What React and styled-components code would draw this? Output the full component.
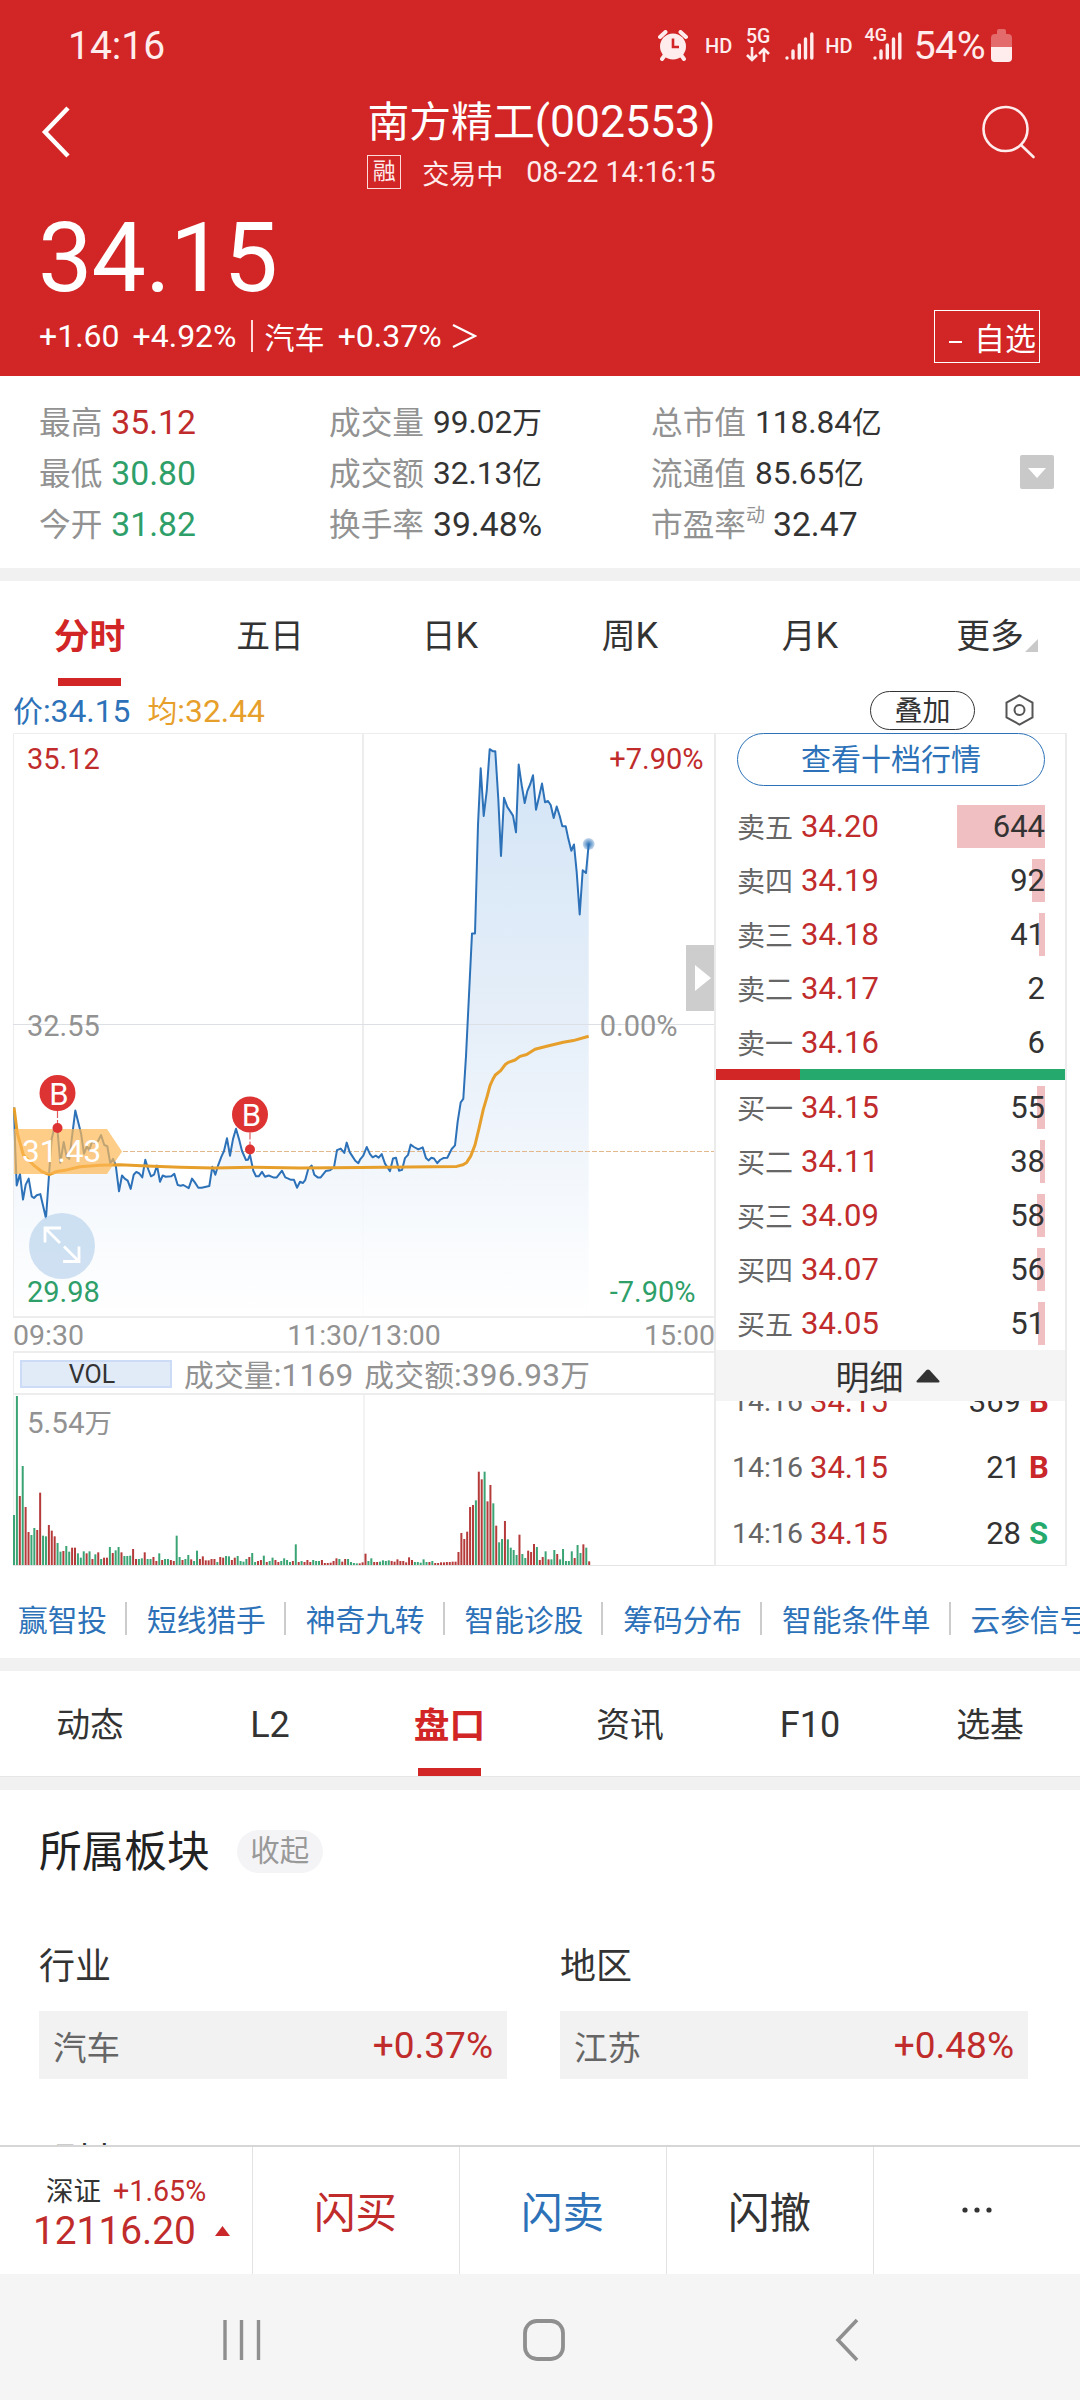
import styled, { createGlobalStyle } from 'styled-components';

const RED = '#d12526';
const UP = '#c02b2b';
const DOWN = '#2f9f6a';
const BLUE = '#2d72b8';
const ORANGE = '#e79f2c';
const FONT = "Roboto, 'Noto Sans CJK SC', sans-serif";

const GlobalStyle = createGlobalStyle`
  * { box-sizing: border-box; }
  body {
    margin: 0;
    background: #fff;
    color: #333;
    font-family: ${FONT};
  }
  svg { display: block; flex-shrink: 0; }
`;

const Screen = styled.div`
  width: 1080px;
  height: 2400px;
  overflow: hidden;
  display: flex;
  flex-direction: column;
  background: #fff;
  white-space: nowrap;
`;

// Chinese glyphs are set a little smaller than the digits beside them
const Han = styled.span`
  font-size: 0.94em;
`;

const Mixed = ({ children }) =>
  String(children)
    .split(/([\u4e00-\u9fff]+)/)
    .map((part, i) => (i % 2 ? <Han key={i}>{part}</Han> : part));

/* ---------- header ---------- */

const Header = styled.header`
  height: 376px;
  background: ${RED};
  color: #fff;
  flex-shrink: 0;
`;

const StatusBar = styled.div`
  height: 90px;
  padding: 1px 68px 0 68px;
  display: flex;
  align-items: center;
  font-size: 39px;
  color: #ffecec;
`;

const StatusIcons = styled.div`
  margin-left: auto;
  display: flex;
  align-items: center;
`;

const Hd = styled.span`
  font-size: 20px;
  font-weight: 500;
  margin-left: ${props => props.$gap}px;
`;

const NetType = styled.div`
  width: 24px;
  margin-left: 14px;
  font-size: 19.5px;
  font-weight: 500;
  line-height: 16px;
  display: flex;
  flex-direction: column;
  align-items: center;
  gap: 2px;
`;

const FourG = styled.div`
  position: relative;
  margin-left: 21px;

  span {
    position: absolute;
    left: -9px;
    top: -6px;
    font-size: 18px;
    font-weight: 500;
    line-height: 18px;
  }
`;

const SignalIcon = styled.svg`
  margin-left: ${props => props.$gap || 0}px;
`;

const Percent = styled.span`
  font-size: 39.5px;
  margin-left: 11px;
  margin-right: 6px;
  letter-spacing: -0.6px;
`;

const Signal = ({ gap }) => (
  <SignalIcon $gap={gap} width="29" height="28" viewBox="0 0 29 28" stroke="#ffecec" strokeWidth="3.4" strokeLinecap="round">
    <path d="M2 26v.01M8 26v-7M14.3 26v-13M20.5 26v-19M26.8 26v-24" />
  </SignalIcon>
);

const TitleBar = styled.div`
  height: 114px;
  padding: 9px 44px 0 41px;
  display: flex;
  justify-content: space-between;
`;

const TitleBlock = styled.div`
  display: flex;
  flex-direction: column;
  align-items: center;
  gap: 9px;
  margin-left: 29px;
`;

const StockName = styled.div`
  font-size: 44.5px;
  line-height: 46px;
`;

const StockMeta = styled.div`
  display: flex;
  align-items: center;
  height: 34px;
  font-size: 28.8px;
  letter-spacing: -0.1px;
  color: #ffecec;
`;

const MarginTag = styled.span`
  width: 34px;
  height: 34px;
  border: 1.5px solid #ffdada;
  font-size: 23px;
  line-height: 32px;
  text-align: center;
  margin-right: 21px;
`;

const MetaTime = styled.span`
  margin-left: 23px;
`;

const LastPrice = styled.div`
  height: 106px;
  line-height: 108px;
  padding-left: 38px;
  font-size: 97px;
  letter-spacing: -0.9px;
`;

const ChangeRow = styled.div`
  height: 52px;
  padding: 0 40px 0 39px;
  display: flex;
  align-items: center;
  font-size: 32px;
`;

const Change = styled.span`
  margin-right: ${props => props.$gap || 0}px;
`;

const VRule = styled.i`
  width: 2px;
  height: 32px;
  background: #ffdada;
  margin: 0 12px 0 14px;
`;

const WatchButton = styled.button`
  width: 106px;
  height: 53px;
  margin-left: auto;
  padding: 0 3px 0 14px;
  border: 1.5px solid #fff;
  background: none;
  color: #fff;
  font: 31px ${FONT};
  display: flex;
  align-items: center;
  justify-content: space-between;
`;

const Dash = styled.i`
  width: 13px;
  height: 2px;
  background: #fff;
  margin-top: 11px;
`;

/* ---------- key figures ---------- */

const Stats = styled.section`
  height: 192px;
  flex-shrink: 0;
  padding: 21px 26px 0 39px;
  display: flex;
  align-items: flex-start;
`;

const StatColumn = styled.div`
  width: ${props => props.$width}px;
`;

const Stat = styled.div`
  height: 51px;
  line-height: 51px;
  font-size: 33.7px;
  color: ${props => props.$color || '#333'};
`;

const StatLabel = styled.span`
  color: #929292;
  margin-right: 9px;

  sup {
    font-size: 19px;
    line-height: 0;
    vertical-align: 14px;
    margin-right: -1px;
  }
`;

const StatValue = styled.span`
  font-size: ${props => (props.$unit ? 31.6 : 33.7)}px;
  line-height: 1;
  vertical-align: ${props => (props.$unit ? 1.5 : 0)}px;
`;

const MoreToggle = styled.button`
  width: 34px;
  height: 34px;
  margin: 58px 0 0 auto;
  padding: 0;
  border: 0;
  border-radius: 2px;
  background: #c9c9c9;
  display: flex;
  align-items: center;
  justify-content: center;
`;

const Band = styled.div`
  height: ${props => props.$height || 13}px;
  flex-shrink: 0;
  background: #f1f1f1;
  border-top: ${props => (props.$lined ? '1px solid #e6e6e6' : '0')};
`;

/* ---------- tabs ---------- */

const Tabs = styled.nav`
  height: 105px;
  flex-shrink: 0;
  display: grid;
  grid-template-columns: repeat(6, 1fr);
`;

const Tab = styled.a`
  display: flex;
  flex-direction: column;
  align-items: center;
  justify-content: space-between;
  font-size: ${props => (props.$active ? 38 : 36)}px;
  font-weight: ${props => (props.$active ? 700 : 400)};
  line-height: 50px;
  padding: ${props => props.$top}px ${props => (props.$active ? 1 : 0)}px 0 0;
  color: ${props => (props.$active ? RED : '#333')};

  &::after {
    content: '';
    width: 63px;
    height: 8px;
    background: ${props => (props.$active ? RED : 'transparent')};
  }
`;

const MoreLabel = styled.span`
  position: relative;

  svg {
    position: absolute;
    right: -14px;
    bottom: 10px;
  }
`;

/* ---------- chart and order book ---------- */

const ChartInfo = styled.div`
  height: 47px;
  flex-shrink: 0;
  padding: 1px 46px 0 13px;
  display: flex;
  align-items: center;
  font-size: 31.8px;
`;

const InfoValue = styled.span`
  color: ${props => props.$color};
  margin: -3px 17px 0 0;
`;

const OverlayButton = styled.button`
  width: 105px;
  height: 39px;
  margin: 0 30px 0 auto;
  padding: 0;
  border: 1.5px solid #333;
  border-radius: 20px;
  background: none;
  color: #333;
  font: 28px/39px ${FONT};
`;

const Market = styled.section`
  height: 833px;
  flex-shrink: 0;
  padding: 0 13px;
  display: flex;
`;

const Charts = styled.div`
  width: 702px;
  flex-shrink: 0;
`;

const TimeAxis = styled.div`
  height: 37px;
  border-top: 2px solid #ededed;
  border-bottom: 2px solid #ededed;
  display: flex;
  align-items: center;
  justify-content: space-between;
  padding-top: 2px;
  font-size: 28.5px;
  color: #929292;
`;

const VolumeBar = styled.div`
  height: 42px;
  border-left: 1px solid #ededed;
  border-bottom: 2px solid #ededed;
  padding: 1px 0 0 6px;
  display: flex;
  align-items: center;
  font-size: 31.6px;
  color: #929292;
`;

const VolButton = styled.span`
  width: 152px;
  height: 28px;
  margin-right: 12px;
  padding-right: 8px;
  border: 2px solid #cddcf6;
  background: #e1eaf7;
  color: #333;
  font-size: 25px;
  line-height: 26px;
  text-align: center;
`;

const VolText = styled.span`
  margin-right: 11px;
  letter-spacing: 0.2px;
`;

const Book = styled.div`
  width: 353px;
  flex-shrink: 0;
  margin-left: -1px;
  border: 2px solid #ebebeb;
  border-top-width: 1px;
  border-bottom-width: 1px;
  display: flex;
  flex-direction: column;
`;

const DepthButton = styled.button`
  height: 53px;
  flex-shrink: 0;
  margin: -1px 20px 13px 21px;
  padding: 0;
  border: 1.5px solid ${BLUE};
  border-radius: 27px;
  background: #fff;
  color: ${BLUE};
  font: 30px/50px ${FONT};
`;

const Level = styled.div`
  height: 54px;
  flex-shrink: 0;
  padding: 0 20px 0 21px;
  display: flex;
  align-items: center;
  font-size: 31px;
`;

const LevelName = styled.span`
  width: 64px;
  font-size: 28px;
  color: #666;
`;

const LevelPrice = styled.span`
  color: ${UP};
`;

const LevelQty = styled.span`
  position: relative;
  z-index: 0;
  margin-left: auto;
  line-height: 43px;

  i {
    position: absolute;
    z-index: -1;
    top: 0;
    right: 0;
    height: 43px;
    background: #efbfc1;
  }
`;

const Balance = styled.div`
  height: 11px;
  flex-shrink: 0;
  background: linear-gradient(to right, ${RED} 24%, #25a96d 24%);
`;

const DetailHead = styled.div`
  height: 51px;
  flex-shrink: 0;
  background: #f4f4f4;
  display: flex;
  align-items: center;
  justify-content: center;
  gap: 12px;
  padding-right: 6px;
  font-size: 34px;
  z-index: 1;
`;

const Ticks = styled.div`
  flex: 1;
  overflow: hidden;
`;

const Tick = styled.div`
  height: 66px;
  padding: 0 16px;
  display: flex;
  align-items: center;
  font-size: 31px;

  &:first-child {
    margin-top: -33px;
  }
`;

const TickTime = styled.span`
  width: 78px;
  font-size: 28.5px;
  color: #666;
`;

const TickQty = styled.span`
  margin-left: auto;
`;

const Side = styled.b`
  width: 20px;
  margin-left: 8px;
  color: ${props => (props.$sell ? '#25a96d' : '#c9272a')};
`;

/* ---------- links ---------- */

const Links = styled.div`
  height: 92px;
  flex-shrink: 0;
  padding: 12px 0 0 18px;
  display: flex;
  align-items: center;
  overflow: hidden;
  color: ${BLUE};
  font-size: 29.7px;

  a {
    flex-shrink: 0;
  }

  a + a {
    margin-left: 18px;
    padding-left: 22px;
    background: linear-gradient(#ccc, #ccc) left center / 2px 33px no-repeat;
  }
`;

/* ---------- sectors ---------- */

const Sectors = styled.section`
  height: 355px;
  flex-shrink: 0;
  overflow: hidden;
  padding: 32px 53px 0 39px;
`;

const SectionTitle = styled.h2`
  margin: 0;
  height: 60px;
  display: flex;
  align-items: center;
  font-size: 42.7px;
  font-weight: 400;
  line-height: 60px;
  color: #222;
`;

const FoldButton = styled.button`
  width: 86px;
  height: 43px;
  margin: -1px 0 0 27px;
  padding: 0;
  border: 0;
  border-radius: 22px;
  background: #f4f4f6;
  color: #999;
  font: 29.5px/43px ${FONT};
`;

const SectorGrid = styled.div`
  display: grid;
  grid-template-columns: 468px 468px;
  column-gap: 53px;
  padding-top: 54px;
`;

const SectorName = styled.div`
  height: 75px;
  line-height: 63px;
  font-size: 36px;
`;

const SectorCard = styled.div`
  height: 68px;
  margin-bottom: 52px;
  padding: 0 14px;
  background: #f2f2f2;
  display: flex;
  align-items: center;
  justify-content: space-between;
  font-size: 33.5px;
  color: #666;

  em {
    font-style: normal;
    font-size: 37px;
    color: ${UP};
  }
`;

/* ---------- bottom ---------- */

const TradeBar = styled.footer`
  height: 129px;
  flex-shrink: 0;
  border-top: 2px solid #d6d6d6;
  display: grid;
  grid-template-columns: 252px repeat(4, 207px);
  background: #fff;
`;

const TradeItem = styled.div`
  display: flex;
  align-items: center;
  justify-content: center;
  padding: 0 1px 2px 0;
  border-left: 1px solid #e2e2e2;
  font-size: 41.5px;
  color: ${props => props.$color || '#333'};
`;

const IndexCell = styled.div`
  padding: 27px 0 0 33px;
  color: ${UP};
`;

const IndexTop = styled.div`
  padding-left: 13px;
  font-size: 28.7px;
  line-height: 34px;

  span {
    color: #333;
    font-size: 27.5px;
    margin-right: 12px;
  }
`;

const IndexValue = styled.div`
  display: flex;
  align-items: center;
  gap: 19px;
  font-size: 38.8px;
  line-height: 44px;
`;

const NavBar = styled.div`
  flex: 1;
  background: #f5f5f5;
  display: flex;
  align-items: center;
  padding: 6px 0 0 223px;
`;

const NavIcon = styled.svg`
  margin-right: ${props => props.$gap || 0}px;
`;

/* ---------- data ---------- */

const stats = [
  {
    width: 290,
    items: [
      ['最高', '35.12', UP],
      ['最低', '30.80', DOWN],
      ['今开', '31.82', DOWN],
    ],
  },
  {
    width: 322,
    items: [
      ['成交量', '99.02万'],
      ['成交额', '32.13亿'],
      ['换手率', '39.48%'],
    ],
  },
  {
    width: 300,
    items: [
      ['总市值', '118.84亿'],
      ['流通值', '85.65亿'],
      ['市盈率', '32.47', null, '动'],
    ],
  },
];

const sells = [
  ['卖五', '34.20', 644, 88],
  ['卖四', '34.19', 92, 13],
  ['卖三', '34.18', 41, 6],
  ['卖二', '34.17', 2, 0],
  ['卖一', '34.16', 6, 0],
];

const buys = [
  ['买一', '34.15', 55, 8],
  ['买二', '34.11', 38, 5],
  ['买三', '34.09', 58, 8],
  ['买四', '34.07', 56, 8],
  ['买五', '34.05', 51, 7],
];

const ticks = [
  ['14:16', '34.15', 369, 'B'],
  ['14:16', '34.15', 21, 'B'],
  ['14:16', '34.15', 28, 'S'],
];

const links = ['赢智投', '短线猎手', '神奇九转', '智能诊股', '筹码分布', '智能条件单', '云参信号'];

// x,y pairs on a 2106 x 1474 grid that is stretched over the plot
const PRICE = `3,947 7,1057 11,1144 21,1115 30,1180 38,1142 47,1127 56,1172 63,1176 71,1169 82,1166
99,1227 109,1107 116,1027 124,999 133,999 142,1087 152,1034 161,1072 169,1077 178,1015 187,955
204,1012 213,1064 222,1045 229,1055 237,1033 246,1037 255,1032 264,1017 274,1042 283,1045 292,1089
300,1077 308,1092 318,1159 327,1119 335,1127 344,1132 353,1153 362,1117 370,1110 379,1114 388,1124
397,1079 406,1104 414,1121 423,1117 432,1094 441,1135 449,1119 458,1122 475,1121 484,1115 494,1143
503,1145 511,1143 527,1151 537,1127 546,1137 556,1150 566,1150 589,1146 598,1097 607,1117 616,1092
625,1072 633,1057 642,1025 651,1069 660,1027 669,1001 678,1027 687,1057 699,1080 705,1079 711,1067
721,1107 729,1121 737,1121 747,1110 756,1122 767,1119 781,1124 791,1124 807,1107 817,1124 826,1127
834,1130 843,1130 852,1150 861,1135 870,1138 877,1130 886,1102 896,1094 904,1117 914,1124 923,1124
938,1108 951,1106 963,1098 972,1055 983,1051 994,1062 1001,1036 1010,1060 1018,1070 1027,1082 1036,1088
1041,1079 1051,1069 1061,1047 1071,1065 1079,1073 1088,1069 1097,1074 1106,1065 1116,1089 1131,1108
1140,1076 1149,1074 1158,1107 1167,1105 1176,1075 1185,1067 1193,1041 1203,1047 1216,1053 1229,1048
1239,1075 1247,1081 1255,1074 1263,1076 1273,1088 1281,1080 1291,1075 1303,1074 1316,1052 1326,1043
1334,982 1343,934 1351,925 1359,817 1368,662 1377,507 1386,507 1395,232 1403,89 1412,210 1421,147
1430,41 1439,46 1447,46 1456,167 1464,311 1473,164 1483,187 1500,209 1509,251 1517,80 1526,132
1535,177 1543,147 1552,129 1560,107 1569,194 1578,162 1587,128 1596,175 1605,172 1613,182 1622,215
1631,186 1640,210 1648,236 1658,236 1666,267 1675,298 1683,282 1691,352 1700,459 1709,347 1719,354
1727,281`;

const AVERAGE = `3,947 13,1012 31,1067 61,1092 86,1109 109,1117 131,1109 161,1105 201,1097 261,1093
321,1092 401,1095 501,1098 601,1100 721,1098 861,1100 1041,1099 1331,1096 1350,1092 1361,1086 1373,1070
1386,1042 1398,1000 1411,952 1422,920 1431,892 1440,875 1447,865 1463,854 1476,839 1486,833 1506,827
1521,818 1541,813 1566,800 1601,792 1651,782 1681,778 1727,767`;

const parse = text =>
  text.split(/\s+/).map(pair => {
    const [x, y] = pair.split(',').map(Number);
    return [x / 3, y / 2.529];
  });

const toLine = points => points.map(p => p.map(n => n.toFixed(1)).join(',')).join(' ');

// one entry a minute: g = falling, r = rising, then the height in thirds of a pixel
const VOLUME = `g150 g507 r207 g297 r174 r99 g90 g111 r105 r217 g88 g86 r120 r103 r86 g66 g40 r42 g57 g40
r52 r52 g35 g22 g41 r35 g41 r18 g32 r38 g18 r22 r22 g54 r36 g44 g54 r38 g27 g27 g28 r48 r18 g18 g20 r38
g18 g18 r24 r12 g35 r15 g18 g18 r15 r12 g88 g24 r15 g18 g30 r17 g12 g43 r18 r26 r14 r14 r18 r18 g9 r24
r22 g27 g26 r15 r22 g27 g12 g10 g18 r24 g36 g9 r12 r15 g28 r9 g12 g22 r15 r9 g12 g20 g15 g9 r12 g62 r9
g12 r9 r15 r9 g15 g12 g12 r15 r6 r6 r7 r12 r20 g18 r10 r18 g18 g9 g6 g5 r5 r8 r34 g12 g20 r9 r9 g10 g14
g12 g14 r12 r10 r17 r12 r12 r8 r23 r15 g9 g9 g7 g17 g9 r9 g12 r6 r6 r8 r8 r9 r9 r10 r10 r39 r96 r78 r100
r174 r180 g194 r280 r257 g280 r191 r240 g185 r118 g68 g78 r132 g77 g52 g45 g30 r91 g33 g21 r43 r39 r63
g54 r15 r24 g41 r17 g17 g45 r33 g17 g48 g12 g12 g41 r21 g60 g36 r62 g52 r11`.split(/\s+/);

const BuyMark = ({ x, y }) => (
  <g>
    <path d={`M${x} ${y + 18}v14`} stroke="#e05a5a" strokeWidth="1.2" strokeDasharray="7 2" />
    <circle cx={x} cy={y} r="18" fill="#dd3333" />
    <circle cx={x} cy={y + 35} r="5" fill="#dd3333" />
    <text x={x + 1.5} y={y + 11.5} fontSize="31" fill="#fff" textAnchor="middle">B</text>
  </g>
);

const PriceChart = () => {
  const price = parse(PRICE);
  const line = toLine(price);
  const [lastX, lastY] = price[price.length - 1];

  return (
    <svg width="702" height="583" viewBox="0 0 702 583" fontFamily={FONT} fontSize="29">
      <defs>
        <linearGradient id="area" gradientUnits="userSpaceOnUse" x1="0" y1="0" x2="0" y2="583">
          <stop offset="0" stopColor="#cde1f5" />
          <stop offset="0.5" stopColor="#e3edf8" />
          <stop offset="1" stopColor="#fff" />
        </linearGradient>
        <radialGradient id="glow">
          <stop offset="0" stopColor="#2d72b8" />
          <stop offset="1" stopColor="#2d72b8" stopOpacity="0.25" />
        </radialGradient>
      </defs>
      <path d="M350 1V583" stroke="#ededed" strokeWidth="2" />
      <polygon points={`1,583 ${line} ${lastX},583`} fill="url(#area)" fillOpacity="0.9" />
      <path d="M.5 583V.5H702" fill="none" stroke="#ededed" />
      <path d="M0 291.5H702" stroke="#dcdfe3" />
      <path d="M110 418.5H702" stroke="#e3b88c" strokeDasharray="5 2" />
      <polyline points={line} fill="none" stroke={BLUE} strokeWidth="2" strokeLinejoin="round" />
      <polyline points={toLine(parse(AVERAGE))} fill="none" stroke={ORANGE} strokeWidth="3" strokeLinejoin="round" />
      <circle cx={lastX} cy={lastY} r="6" fill="url(#glow)" />

      <path d="M1 396H94L109 418.5 94 441H1z" fill="#feb854" fillOpacity="0.7" />
      <text x="9" y="429" fontSize="31.5" fill="#fff">31.43</text>
      <BuyMark x={44.5} y={360} />
      <BuyMark x={237} y={381.5} />

      <circle cx="49" cy="513" r="33" fill="#c6daf0" fillOpacity="0.85" />
      <path d="M32 509.500V495H48M33 496L47 510M66 513.500V528.500H50M65 527.500L51 513.500" fill="none" stroke="#fff" strokeWidth="2.8" />

      <text x="14" y="36" fill={UP}>35.12</text>
      <text x="14" y="303" fill="#929292">32.55</text>
      <text x="14" y="569" fill={DOWN}>29.98</text>
      <text x="690.5" y="36" fill={UP} textAnchor="end">+7.90%</text>
      <text x="664.5" y="303" fill="#929292" textAnchor="end">0.00%</text>
      <text x="682.5" y="569" fill={DOWN} textAnchor="end">-7.90%</text>

      <rect x="673" y="212" width="29" height="66" fill="#cdcdcd" />
      <path d="M682 232L698 245 682 258z" fill="#fff" />
    </svg>
  );
};

const VolumeChart = () => (
  <svg width="702" height="171" viewBox="0 0 702 171" fontFamily={FONT}>
    <path d="M351 0V170M.5 0V170" stroke="#f0f0f0" strokeWidth="1.5" />
    {VOLUME.map((entry, i) => {
      const height = Number(entry.slice(1)) / 3;
      return (
        <rect
          key={i}
          x={i * 2.905}
          y={170 - height}
          width="2"
          height={height}
          fill={entry[0] === 'g' ? '#3ba474' : '#b53b3b'}
        />
      );
    })}
    <path d="M0 170.5H702" stroke="#e4e4e4" />
    <text x="14" y="38" fontSize="29.5" fill="#929292">
      5.54<tspan fontSize="27.5">万</tspan>
    </text>
  </svg>
);

const LevelRow = ({ level: [name, price, qty, width] }) => (
  <Level>
    <LevelName>{name}</LevelName>
    <LevelPrice>{price}</LevelPrice>
    <LevelQty>
      {qty}
      <i style={{ width }} />
    </LevelQty>
  </Level>
);

const TabRow = ({ tabs, active, top }) => (
  <Tabs>
    {tabs.map(name => (
      <Tab key={name} $active={name === active} $top={top}>
        {name === '更多' ? (
          <MoreLabel>
            <Mixed>{name}</Mixed>
            <svg width="13" height="13"><path d="M13 0V13H0z" fill="#c9c9c9" /></svg>
          </MoreLabel>
        ) : (
          <span><Mixed>{name}</Mixed></span>
        )}
      </Tab>
    ))}
  </Tabs>
);

const App = () => (
  <Screen lang="zh-CN">
    <GlobalStyle />
    <Header>
      <StatusBar>
        14:16
        <StatusIcons>
          <svg width="30" height="31" viewBox="0 0 30 31">
            <path d="M2 7L7.500 2M28 7L22.500 2M7 25L4 29M23 25L26 29" stroke="#ffecec" strokeWidth="4" strokeLinecap="round" />
            <circle cx="15" cy="16.500" r="13" fill="#ffecec" />
            <path d="M15 8.500V17H21" fill="none" stroke={RED} strokeWidth="2.6" />
          </svg>
          <Hd $gap={17}>HD</Hd>
          <NetType>
            5G
            <svg width="24" height="15" viewBox="0 0 24 15" fill="none" stroke="#ffecec" strokeWidth="2.6">
              <path d="M6 0V13M1 8L6 13 11 8M18 15V2M13 7L18 2 23 7" />
            </svg>
          </NetType>
          <Signal gap={15} />
          <Hd $gap={11}>HD</Hd>
          <FourG>
            <span>4G</span>
            <Signal />
          </FourG>
          <Percent>54%</Percent>
          <svg width="21" height="33" viewBox="0 0 21 33">
            <path d="M6 5V2Q6 0 8 0H13Q15 0 15 2V5H17Q21 5 21 9V18H0V9Q0 5 4 5z" fill="#e36b6c" />
            <path d="M0 18H21V29Q21 33 17 33H4Q0 33 0 29z" fill="#ffecec" />
          </svg>
        </StatusIcons>
      </StatusBar>
      <TitleBar>
        <svg width="31" height="66" viewBox="0 0 31 66">
          <path d="M27 9L4 33 27 57" fill="none" stroke="#fff" strokeWidth="4.5" />
        </svg>
        <TitleBlock>
          <StockName><Mixed>南方精工(002553)</Mixed></StockName>
          <StockMeta>
            <MarginTag>融</MarginTag>
            <Mixed>交易中</Mixed>
            <MetaTime>08-22 14:16:15</MetaTime>
          </StockMeta>
        </TitleBlock>
        <svg width="54" height="66" viewBox="0 0 54 66" fill="none" stroke="#ffecec" strokeWidth="2.6" strokeLinecap="round">
          <circle cx="23.500" cy="30" r="22" />
          <path d="M39 46L51.500 58" />
        </svg>
      </TitleBar>
      <LastPrice>34.15</LastPrice>
      <ChangeRow>
        <Change $gap={13}>+1.60</Change>
        <Change>+4.92%</Change>
        <VRule />
        <Change $gap={13}><Mixed>汽车</Mixed></Change>
        <Change $gap={10}>+0.37%</Change>
        <svg width="25" height="26" viewBox="0 0 25 26">
          <path d="M1 2L23 13 1 24" fill="none" stroke="#fff" strokeWidth="2.2" />
        </svg>
        <WatchButton>
          <Dash />
          自选
        </WatchButton>
      </ChangeRow>
    </Header>

    <Stats>
      {stats.map(column => (
        <StatColumn key={column.width} $width={column.width}>
          {column.items.map(([label, value, color, sup]) => (
            <Stat key={label} $color={color}>
              <StatLabel>
                <Mixed>{label}</Mixed>
                {sup && <sup>{sup}</sup>}
              </StatLabel>
              <StatValue $unit={/[万亿]$/.test(value)}><Mixed>{value}</Mixed></StatValue>
            </Stat>
          ))}
        </StatColumn>
      ))}
      <MoreToggle>
        <svg width="18" height="11"><path d="M0 1H18L9 11z" fill="#fff" /></svg>
      </MoreToggle>
    </Stats>
    <Band />

    <TabRow tabs={['分时', '五日', '日K', '周K', '月K', '更多']} active="分时" top={30} />
    <ChartInfo>
      <InfoValue $color={BLUE}><Mixed>价:34.15</Mixed></InfoValue>
      <InfoValue $color={ORANGE}><Mixed>均:32.44</Mixed></InfoValue>
      <OverlayButton>叠加</OverlayButton>
      <svg width="29" height="32" viewBox="0 0 29 32" fill="none" stroke="#555" strokeWidth="2">
        <path d="M14.500 1.500L27.500 8.700V23.300L14.500 30.500 1.500 23.300V8.700z" />
        <circle cx="14.500" cy="16" r="5" />
      </svg>
    </ChartInfo>

    <Market>
      <Charts>
        <PriceChart />
        <TimeAxis>
          <span>09:30</span>
          <span>11:30/13:00</span>
          <span>15:00</span>
        </TimeAxis>
        <VolumeBar>
          <VolButton>VOL</VolButton>
          <VolText><Mixed>成交量:1169</Mixed></VolText>
          <VolText><Mixed>成交额:396.93万</Mixed></VolText>
        </VolumeBar>
        <VolumeChart />
      </Charts>
      <Book>
        <DepthButton>查看十档行情</DepthButton>
        {sells.map(level => <LevelRow key={level[0]} level={level} />)}
        <Balance />
        {buys.map(level => <LevelRow key={level[0]} level={level} />)}
        <DetailHead>
          明细
          <svg width="24" height="14"><path d="M10.500 1Q12 0 13.500 1L23.500 12Q24 13.500 22 13.500H2Q0 13.500.500 12z" fill="#333" /></svg>
        </DetailHead>
        <Ticks>
          {ticks.map(([time, price, qty, side], i) => (
            <Tick key={i}>
              <TickTime>{time}</TickTime>
              <LevelPrice>{price}</LevelPrice>
              <TickQty>{qty}</TickQty>
              <Side $sell={side === 'S'}>{side}</Side>
            </Tick>
          ))}
        </Ticks>
      </Book>
    </Market>

    <Links>
      {links.map(name => <a key={name}>{name}</a>)}
    </Links>
    <Band />

    <TabRow tabs={['动态', 'L2', '盘口', '资讯', 'F10', '选基']} active="盘口" top={29} />
    <Band $height={14} $lined />

    <Sectors>
      <SectionTitle>
        所属板块
        <FoldButton>收起</FoldButton>
      </SectionTitle>
      <SectorGrid>
        <div>
          <SectorName>行业</SectorName>
          <SectorCard>汽车<em>+0.37%</em></SectorCard>
          <SectorName>题材</SectorName>
        </div>
        <div>
          <SectorName>地区</SectorName>
          <SectorCard>江苏<em>+0.48%</em></SectorCard>
        </div>
      </SectorGrid>
    </Sectors>

    <TradeBar>
      <IndexCell>
        <IndexTop><span>深证</span>+1.65%</IndexTop>
        <IndexValue>
          12116.20
          <svg width="15" height="10"><path d="M7.500 0L15 10H0z" fill="#c9272a" /></svg>
        </IndexValue>
      </IndexCell>
      <TradeItem $color={UP}>闪买</TradeItem>
      <TradeItem $color={BLUE}>闪卖</TradeItem>
      <TradeItem>闪撤</TradeItem>
      <TradeItem>
        <svg width="30" height="6" fill="#333">
          <circle cx="3" cy="3" r="2.600" />
          <circle cx="15" cy="3" r="2.600" />
          <circle cx="27" cy="3" r="2.600" />
        </svg>
      </TradeItem>
    </TradeBar>
    <NavBar>
      <NavIcon $gap={262} width="38" height="40" stroke="#8f8f8f" strokeWidth="3.400">
        <path d="M2 0V40M18.500 0V40M35.500 0V40" />
      </NavIcon>
      <NavIcon $gap={270} width="42" height="42" fill="none" stroke="#8f8f8f" strokeWidth="3.800">
        <rect x="2" y="2" width="38" height="38" rx="12" />
      </NavIcon>
      <NavIcon width="24" height="44" fill="none" stroke="#8f8f8f" strokeWidth="3.600">
        <path d="M22 2L3 22 22 42" />
      </NavIcon>
    </NavBar>
  </Screen>
);

export default App;
